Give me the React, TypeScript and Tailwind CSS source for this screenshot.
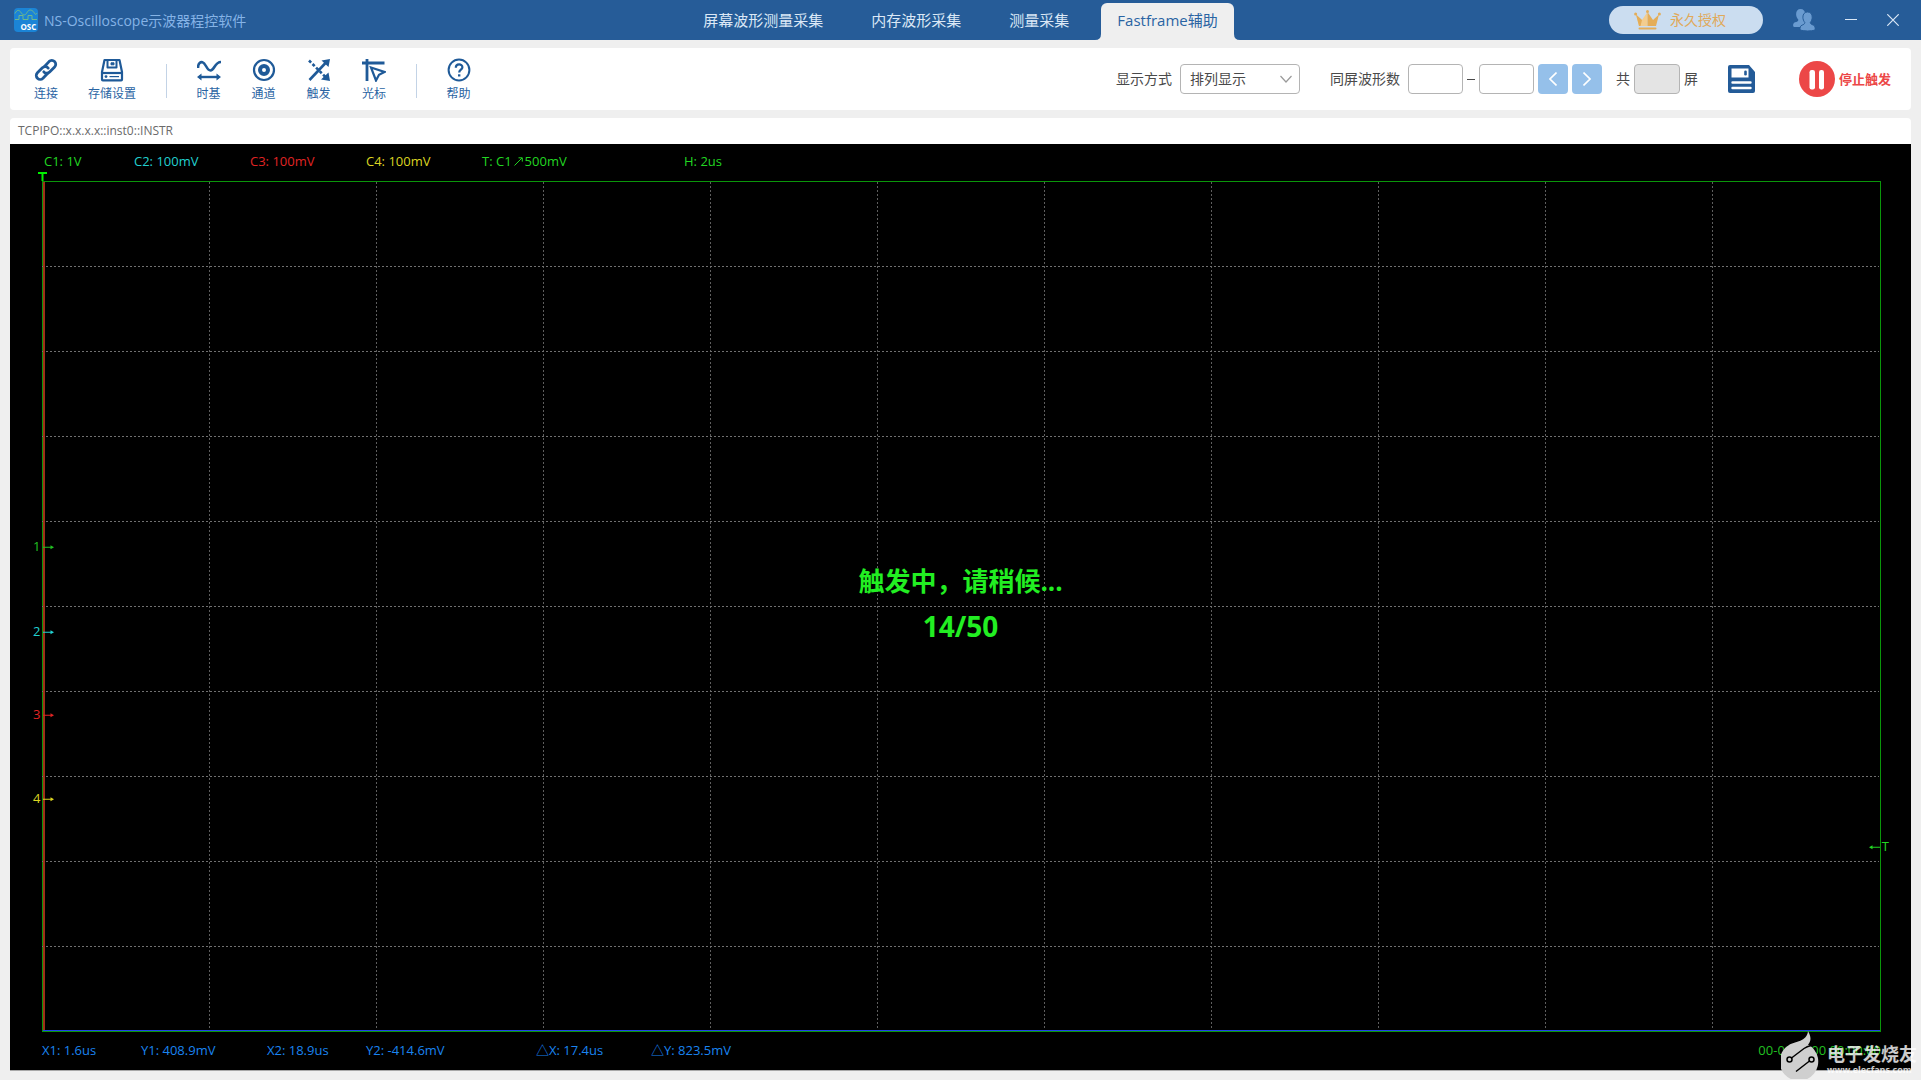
import type { ReactNode } from "react";

type Tool = { label: string; icon: ReactNode; width: string };

function Logo() {
  return (
    <svg viewBox="0 0 24 24" className="size-6 shrink-0" aria-hidden="true">
      <rect width="24" height="24" rx="4" fill="#1b84d6" />
      <path d="M1 5.500C3 1.500 5 1.500 7 4.500S11 8 13 4.500 18 1.500 20 4.500 22 6.500 23 5" fill="none" stroke="#6fb98c" strokeWidth="1" />
      <path d="M1 11.500H5V7.500H9V11.500H14V7.500H18V11.500H23" fill="none" stroke="#6fb98c" strokeWidth="1" />
      <text x="6.500" y="21.500" fill="#fff" fontSize="8" fontWeight="700" fontFamily="Open Sans, sans-serif">OSC</text>
    </svg>
  );
}

function LinkIcon() {
  return (
    <svg viewBox="0 0 24 24" className="size-6" fill="none" stroke="#1f5a98" strokeWidth="2.800" strokeLinecap="round" aria-hidden="true">
      <path d="M10.500 8.500 15 3.600a3.900 3.900 0 0 1 5.600 5.500l-5 5a3.900 3.900 0 0 1-5.800-.3" />
      <path d="M13.500 15.500 9 20.300a3.900 3.900 0 0 1-5.600-5.500l5-5a3.900 3.900 0 0 1 5.800.3" />
    </svg>
  );
}

function StorageIcon() {
  return (
    <svg viewBox="0 0 24 24" className="size-6" fill="none" stroke="#1f5a98" strokeWidth="2.200" strokeLinejoin="round" aria-hidden="true">
      <path d="M4.500 2h15l2.500 12v7.500q0 .8-.8.800H2.800q-.8 0-.8-.8V14z" />
      <path d="M2 15h20" />
      <path d="M7.500 2v7.500h9V2" strokeWidth="2" />
      <path d="M11 4.800v2h3v-2z" strokeWidth="1" fill="#1f5a98" />
      <path d="M9.500 18.600H19" strokeWidth="1.200" />
      <circle cx="6" cy="18.600" r="1.400" fill="#1f5a98" stroke="none" />
    </svg>
  );
}

function TimebaseIcon() {
  return (
    <svg viewBox="0 0 24 24" className="size-6" fill="none" stroke="#1f5a98" strokeWidth="2.600" aria-hidden="true">
      <path d="M1 10C1 5 3.500 3.800 5.500 4.200 9 5 9.500 12.500 13.500 12.500S17.500 4 24 4" />
      <path d="M2 19h20" strokeWidth="2.400" />
      <path d="M4.500 15.500 0 19l4.500 3.500zM19.500 15.500 24 19l-4.500 3.500z" fill="#1f5a98" stroke="none" />
    </svg>
  );
}

function ChannelIcon() {
  return (
    <svg viewBox="0 0 24 24" className="size-6" fill="none" stroke="#1f5a98" aria-hidden="true">
      <circle cx="12" cy="12" r="10" strokeWidth="2.200" />
      <circle cx="12" cy="12" r="4" strokeWidth="4" />
    </svg>
  );
}

function TriggerIcon() {
  return (
    <svg viewBox="0 0 24 24" className="size-6" fill="none" stroke="#1f5a98" strokeWidth="2.600" aria-hidden="true">
      <path d="M2.500 22 19 4.500" />
      <path d="M23 1 21.500 9l-7-6.500zM23 23l-1.500-8.500-7.500 7z" fill="#1f5a98" stroke="none" />
      <path d="M2 2.500 19 19.500" strokeDasharray="3 2" />
    </svg>
  );
}

function CursorIcon() {
  return (
    <svg viewBox="0 0 24 24" className="size-6" fill="none" stroke="#1f5a98" aria-hidden="true">
      <path d="M0 5h22.500M5 1v22" strokeWidth="2.800" />
      <path d="M9 9.500 22.500 14l-5.500 2.800-3 5.700z" strokeWidth="2.200" />
    </svg>
  );
}

function HelpIcon() {
  return (
    <svg viewBox="0 0 24 24" className="size-6" fill="none" stroke="#1f5a98" aria-hidden="true">
      <circle cx="12" cy="12" r="10.400" strokeWidth="2" />
      <path d="M8.800 9.700c0-4.300 6.600-4.200 6.600-.5 0 2.400-3.200 2.600-3.200 5.300" strokeWidth="2.200" />
      <path d="M11 16.300h2.400v2.200H11z" fill="#1f5a98" stroke="none" />
    </svg>
  );
}

function CrownIcon() {
  return (
    <svg viewBox="0 0 27 20" className="h-5 w-[27px]" aria-hidden="true">
      <path d="M2 4.500 8 10l5.500-8V16H5z" fill="#f3cd8e" />
      <path d="M2 4.500 8 10l-1.500 6H5zM25 4.500 19 10l-5.500-8V16H22z" fill="#e4ad58" />
      <circle cx="1.600" cy="4" r="1.500" fill="#e4ad58" />
      <circle cx="13.500" cy="1.500" r="1.500" fill="#e4ad58" />
      <circle cx="25.400" cy="4" r="1.500" fill="#e4ad58" />
      <rect x="4.500" y="17.500" width="18" height="2" rx="1" fill="#e4ad58" />
    </svg>
  );
}

function UsersIcon() {
  return (
    <svg viewBox="0 0 22 22" className="size-[22px]" aria-hidden="true">
      <path d="M7.500 0c3 0 4.700 2 4.700 5 0 2-.8 3.800-1.800 5 .2 1.500 1 2 2 2.400V18H1.200C-.4 18-.3 14 2 13.300c2-.6 3.200-1 3.400-2.600-1-1.200-2.300-3-2.300-5.500C3.100 2 4.700 0 7.500 0z" fill="#6a9bd0" />
      <path d="M14.500 3c3.200 0 4.700 2.200 4.700 5.200 0 2.200-.8 4-1.900 5.200.2 1.700 1.400 2 3 2.700 1.700.7 2.200 2.600 1.700 5-4 1.200-10.600 1.200-14.800 0-.6-2.600.2-4.400 2-5 1.500-.6 2.500-1.100 2.600-2.700-1.100-1.200-1.900-3-1.900-5.200 0-3 1.500-5.200 4.600-5.200z" fill="#6a9bd0" stroke="#265c98" strokeWidth="1" />
    </svg>
  );
}

function SaveIcon() {
  return (
    <svg viewBox="0 0 27 28" className="h-7 w-[27px]" aria-hidden="true">
      <path d="M2 0h19l6 7v19q0 2-2 2H2q-2 0-2-2V2q0-2 2-2z" fill="#235b98" />
      <path d="M3.500 3.500h17v9h-17z" fill="#fff" />
      <rect x="16.200" y="5.500" width="2.600" height="5" rx="1.300" fill="#235b98" />
      <path d="M4.500 17.500h18M4.500 23h18" stroke="#fff" strokeWidth="2.400" strokeLinecap="round" />
    </svg>
  );
}

function PauseIcon() {
  return (
    <svg viewBox="0 0 36 36" className="size-9" aria-hidden="true">
      <circle cx="18" cy="18" r="18" fill="#ec4747" />
      <rect x="10.500" y="9" width="5.500" height="19.500" rx="2.200" fill="#fff" />
      <rect x="20" y="9" width="5" height="19.500" rx="2.200" fill="#fff" />
    </svg>
  );
}

function ToolButton({ label, icon, width }: Tool) {
  return (
    <button type="button" className={`flex shrink-0 flex-col items-center gap-0.5 text-xs leading-5 text-[#2a64a3] ${width}`}>
      {icon}
      <span className="whitespace-nowrap">{label}</span>
    </button>
  );
}

function Divider() {
  return <div className="mx-2 h-[34px] w-px shrink-0 bg-[#c3d3e6]" />;
}

const tabs = ["屏幕波形测量采集", "内存波形采集", "测量采集"];

function TitleBar() {
  return (
    <header className="flex h-10 shrink-0 bg-[#265c98]">
      <div className="flex flex-1 basis-0 items-center gap-1.5 pr-2 pl-3.5">
        <Logo />
        <h1 className="whitespace-nowrap pt-0.5 text-sm text-[#85b3e6]">NS-Oscilloscope示波器程控软件</h1>
      </div>
      <nav className="flex items-end gap-4 text-[15px]">
        {tabs.map((tab) => (
          <button key={tab} type="button" className="h-[37px] whitespace-nowrap px-4 pb-0.5 text-[#dbe8f6]">
            {tab}
          </button>
        ))}
        <button type="button" aria-current="page" className="relative h-[37px] whitespace-nowrap rounded-t-md bg-[#efefef] px-4 pb-0.5 text-[#2a64a3]">
          <svg viewBox="0 0 6 6" className="absolute right-full bottom-0 size-1.5" aria-hidden="true">
            <path d="M6 0v6H0Q6 6 6 0z" fill="#efefef" />
          </svg>
          Fastframe辅助
          <svg viewBox="0 0 6 6" className="absolute bottom-0 left-full size-1.5" aria-hidden="true">
            <path d="M0 0v6h6Q0 6 0 0z" fill="#efefef" />
          </svg>
        </button>
      </nav>
      <div className="flex flex-1 basis-0 items-center justify-end pr-[22px]">
        <button type="button" className="mr-[30px] flex h-7 w-[154px] items-center gap-[9px] rounded-full bg-[#cbddf0] pl-[25px] text-sm text-[#e0a95a]">
          <CrownIcon />
          永久授权
        </button>
        <button type="button" aria-label="用户" className="mr-[30px]">
          <UsersIcon />
        </button>
        <button type="button" aria-label="最小化" className="mr-[30px]">
          <svg viewBox="0 0 12 12" className="size-3" aria-hidden="true">
            <path d="M0 5.500h12" stroke="#dbe8f6" />
          </svg>
        </button>
        <button type="button" aria-label="关闭">
          <svg viewBox="0 0 12 12" className="size-3" aria-hidden="true">
            <path d="M.3.300l11.400 11.400M11.700.300.300 11.700" stroke="#dbe8f6" strokeWidth="1.200" />
          </svg>
        </button>
      </div>
    </header>
  );
}

function Toolbar() {
  const box = "h-[30px] rounded border border-[#b4b4b4]";
  const pager = "flex size-[30px] items-center justify-center rounded bg-[#95c0ea]";
  return (
    <section className="flex h-[62px] shrink-0 items-center rounded bg-white">
      <div className="flex items-center pt-1 pl-3">
        <ToolButton label="连接" icon={<LinkIcon />} width="w-12" />
        <ToolButton label="存储设置" icon={<StorageIcon />} width="w-[84px]" />
        <div className="w-1" />
        <Divider />
        <div className="w-1.5" />
        <ToolButton label="时基" icon={<TimebaseIcon />} width="w-[55px]" />
        <ToolButton label="通道" icon={<ChannelIcon />} width="w-[55px]" />
        <ToolButton label="触发" icon={<TriggerIcon />} width="w-[55px]" />
        <ToolButton label="光标" icon={<CursorIcon />} width="w-[56px]" />
        <div className="w-1.5" />
        <Divider />
        <div className="w-1.5" />
        <ToolButton label="帮助" icon={<HelpIcon />} width="w-[55px]" />
      </div>
      <div className="ml-auto flex items-center whitespace-nowrap pr-5 text-sm text-[#4a4a4a]">
        <label htmlFor="mode" className="mr-2">显示方式</label>
        <div className="relative mr-[30px]">
          <select id="mode" className={`${box} w-[120px] appearance-none bg-white pl-[9px]`}>
            <option>排列显示</option>
          </select>
          <svg viewBox="0 0 12 8" className="pointer-events-none absolute top-[11px] right-2 h-2 w-3" fill="none" aria-hidden="true">
            <path d="M.5 1 6 7l5.500-6" stroke="#9a9a9a" strokeWidth="1.200" />
          </svg>
        </div>
        <label htmlFor="from" className="mr-2">同屏波形数</label>
        <input id="from" type="text" className={`${box} w-[55px] bg-white px-1`} />
        <span className="mx-1 h-px w-2 bg-[#4a4a4a]" />
        <input type="text" aria-label="同屏波形数结束" className={`${box} w-[55px] bg-white px-1`} />
        <button type="button" aria-label="上一屏" className={`${pager} ml-1`}>
          <svg viewBox="0 0 8 14" className="h-3.5 w-2" fill="none" aria-hidden="true">
            <path d="M7.500.500 1 7l6.500 6.500" stroke="#fff" strokeWidth="1.600" />
          </svg>
        </button>
        <button type="button" aria-label="下一屏" className={`${pager} mr-3.5 ml-1`}>
          <svg viewBox="0 0 8 14" className="h-3.5 w-2" fill="none" aria-hidden="true">
            <path d="M.5.500 7 7 .5 13.500" stroke="#fff" strokeWidth="1.600" />
          </svg>
        </button>
        <label htmlFor="total">共</label>
        <input id="total" type="text" readOnly className={`${box} mx-1 w-[46px] bg-[#e4e4e4] px-1`} />
        <span>屏</span>
        <button type="button" aria-label="保存" className="mr-11 ml-[30px]">
          <SaveIcon />
        </button>
        <button type="button" className="flex items-center gap-1 text-[13px] font-bold text-[#ec4747]">
          <PauseIcon />
          停止触发
        </button>
      </div>
    </section>
  );
}

const channels = [
  { text: "C1: 1V", style: "w-[90px] text-[#22d622]" },
  { text: "C2: 100mV", style: "w-[116px] text-[#22d0d0]" },
  { text: "C3: 100mV", style: "w-[116px] text-[#e02424]" },
  { text: "C4: 100mV", style: "w-[116px] text-[#dcd422]" },
];

const measurements = [
  { text: "X1: 1.6us", style: "w-[99px]" },
  { text: "Y1: 408.9mV", style: "w-[126px]" },
  { text: "X2: 18.9us", style: "w-[99px]" },
  { text: "Y2: -414.6mV", style: "w-[170px]" },
  { text: "△X: 17.4us", style: "w-[115px]" },
  { text: "△Y: 823.5mV", style: "w-[115px]" },
];

const markers = [
  { id: "1", top: "43%", style: "text-[#22c022]" },
  { id: "2", top: "53%", style: "text-[#22d0d0]" },
  { id: "3", top: "62.8%", style: "text-[#e02424]" },
  { id: "4", top: "72.7%", style: "text-[#dcd422]" },
];

function Arrow({ flip = false }: { flip?: boolean }) {
  return (
    <svg viewBox="0 0 11 6" className={flip ? "h-1.5 w-[11px] rotate-180" : "h-1.5 w-[11px]"} aria-hidden="true">
      <path d="M0 2.500h9v1H0zM7.500 1 11 3 7.500 5z" fill="currentColor" />
    </svg>
  );
}

function Plot() {
  const columns = Array.from({ length: 10 }, (_, i) => `${((i + 1) * 100) / 11}%`);
  const rows = Array.from({ length: 9 }, (_, i) => `${(i + 1) * 10}%`);
  return (
    <div className="relative min-h-[400px] flex-1 border border-[#0a960a]">
      <svg className="absolute inset-y-0 right-0 -left-px h-full w-full" shapeRendering="crispEdges" strokeDasharray="2 2" aria-hidden="true">
        {columns.map((x) => (
          <line key={x} x1={x} x2={x} y1="0" y2="100%" stroke="#5e5e5e" />
        ))}
        {rows.map((y) => (
          <line key={y} x1="0" x2="100%" y1={y} y2={y} stroke="#707070" />
        ))}
      </svg>
      <div className="absolute inset-y-0 left-0 w-0.5 bg-[#a03018]" />
      <div className="absolute inset-x-0 bottom-0 h-px bg-[#2040e8]" />
      <svg viewBox="0 0 9 9" className="absolute -top-2.5 -left-[5px] size-[9px]" aria-hidden="true">
        <path d="M0 0h9v2H5.500v7h-2V2H0z" fill="#00f000" />
      </svg>
      {markers.map((m) => (
        <div key={m.id} className={`absolute -left-2.5 flex -translate-y-1/2 items-center gap-[3px] text-[13px] ${m.style}`} style={{ top: m.top }}>
          <span>{m.id}</span>
          <Arrow />
        </div>
      ))}
      <div className="absolute -right-[9px] flex -translate-y-1/2 items-center gap-0.5 text-[13px] text-[#22d622]" style={{ top: "78.3%" }}>
        <Arrow flip />
        <span>T</span>
      </div>
      <div className="absolute inset-0 flex flex-col items-center justify-center pr-0.5 pb-1.5 text-[26px] leading-[45px] font-bold text-[#22ee22]" role="status">
        <p>触发中，请稍候...</p>
        <p className="text-[28px]">14/50</p>
      </div>
    </div>
  );
}

function Watermark() {
  return (
    <div className="absolute -right-1.5 -bottom-2 flex items-end gap-[7px] text-white/80">
      <svg viewBox="0 0 39 48" className="h-12 w-[39px]" aria-hidden="true">
        <path d="M27 0c4 7 2.500 11 0 13.500A19.300 19.300 0 1 1 8 14C14 10 26 11 27 0z" fill="#cfcfcf" />
        <g fill="none" stroke="#000" strokeWidth="1.500">
          <circle cx="8.500" cy="28.500" r="2.500" />
          <circle cx="30.500" cy="28.500" r="2.500" />
          <path d="M10.500 27 23 17.500q3-2 7-3M28.500 30 15 40.500" />
        </g>
      </svg>
      <div className="pb-[3px] font-bold">
        <p className="text-[18px] leading-[20px]">电子发烧友</p>
        <p className="text-[9px] leading-[12px]">www.elecfans.com</p>
      </div>
    </div>
  );
}

function Scope() {
  return (
    <section className="relative flex min-h-0 flex-1 flex-col">
      <h2 className="h-[26px] shrink-0 rounded-t bg-white pl-2 text-xs leading-[26px] text-[#6a6a6a]">TCPIPO::x.x.x.x::inst0::INSTR</h2>
      <div className="flex min-h-0 flex-1 flex-col border-b border-[#a8a8a8] bg-black pr-[30px] pl-8 text-[13px]">
        <div className="flex h-[37px] shrink-0 items-center whitespace-nowrap pb-0.5 pl-0.5 text-[#22d622]">
          {channels.map((c) => (
            <span key={c.text} className={c.style}>{c.text}</span>
          ))}
          <span className="flex w-[202px] items-center gap-0.5">
            T: C1
            <svg viewBox="0 0 9 9" className="size-[9px]" aria-hidden="true">
              <path d="M.5 8.500 8 1M4.500.800h3.800v3.800" fill="none" stroke="currentColor" />
            </svg>
            500mV
          </span>
          <span>H: 2us</span>
        </div>
        <Plot />
        <div className="flex h-[38px] shrink-0 items-center whitespace-nowrap text-[#1a84f0]">
          {measurements.map((m) => (
            <span key={m.text} className={m.style}>{m.text}</span>
          ))}
          <time className="ml-auto text-[#22c022]">00-00-0000 00:00:00</time>
        </div>
      </div>
      <Watermark />
    </section>
  );
}

export default function App() {
  return (
    <div className="flex h-screen min-h-[640px] flex-col bg-[#efefef] font-['Open_Sans','Noto_Sans_CJK_SC',sans-serif]">
      <TitleBar />
      <main className="flex min-h-0 flex-1 flex-col gap-2 px-2.5 pt-2 pb-[9px]">
        <Toolbar />
        <Scope />
      </main>
    </div>
  );
}
